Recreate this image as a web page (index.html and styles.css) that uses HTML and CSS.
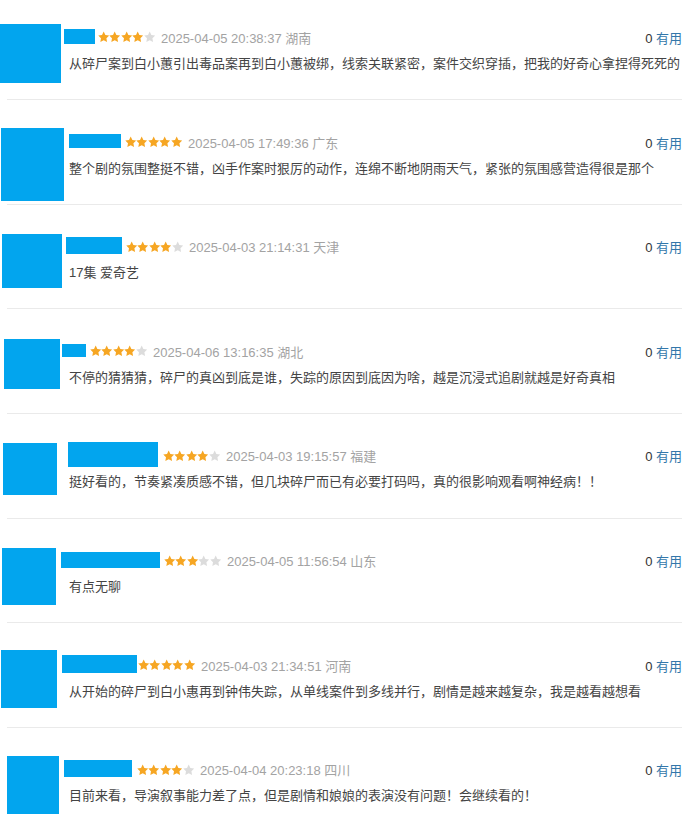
FILE: index.html
```html
<!DOCTYPE html>
<html lang="zh-CN">

<head>
    <meta charset="UTF-8">
    <meta name="viewport" content="width=device-width, initial-scale=1.0">
    <title>短评</title>
    <link rel="stylesheet" href="styles.css">
</head>

<body>
    <svg class="defs" aria-hidden="true">
        <symbol id="star" viewBox="1.5 1.5 21 21">
            <polygon points="12,2 15.09,8.26 22,9.27 17,14.14 18.18,21.02 12,17.77 5.82,21.02 7,14.14 2,9.27 8.91,8.26" />
        </symbol>
    </svg>

    <ul class="comment-list">
        <li class="comment">
            <div class="avatar"></div>
            <div class="comment-body">
                <div class="comment-info">
                    <span class="user-name"></span>
                    <span class="rating">
                        <svg class="on"><use href="#star" /></svg><svg class="on"><use href="#star" /></svg><svg class="on"><use href="#star" /></svg><svg class="on"><use href="#star" /></svg><svg><use href="#star" /></svg>
                    </span>
                    <span class="comment-time">2025-04-05 20:38:37 湖南</span>
                    <span class="votes"><span class="vote-count">0</span> <a href="#" class="vote-link">有用</a></span>
                </div>
                <p class="comment-text">从碎尸案到白小蕙引出毒品案再到白小蕙被绑，线索关联紧密，案件交织穿插，把我的好奇心拿捏得死死的</p>
            </div>
        </li>
        <li class="comment">
            <div class="avatar"></div>
            <div class="comment-body">
                <div class="comment-info">
                    <span class="user-name"></span>
                    <span class="rating">
                        <svg class="on"><use href="#star" /></svg><svg class="on"><use href="#star" /></svg><svg class="on"><use href="#star" /></svg><svg class="on"><use href="#star" /></svg><svg class="on"><use href="#star" /></svg>
                    </span>
                    <span class="comment-time">2025-04-05 17:49:36 广东</span>
                    <span class="votes"><span class="vote-count">0</span> <a href="#" class="vote-link">有用</a></span>
                </div>
                <p class="comment-text">整个剧的氛围整挺不错，凶手作案时狠厉的动作，连绵不断地阴雨天气，紧张的氛围感营造得很是那个</p>
            </div>
        </li>
        <li class="comment">
            <div class="avatar"></div>
            <div class="comment-body">
                <div class="comment-info">
                    <span class="user-name"></span>
                    <span class="rating">
                        <svg class="on"><use href="#star" /></svg><svg class="on"><use href="#star" /></svg><svg class="on"><use href="#star" /></svg><svg class="on"><use href="#star" /></svg><svg><use href="#star" /></svg>
                    </span>
                    <span class="comment-time">2025-04-03 21:14:31 天津</span>
                    <span class="votes"><span class="vote-count">0</span> <a href="#" class="vote-link">有用</a></span>
                </div>
                <p class="comment-text">17集 爱奇艺</p>
            </div>
        </li>
        <li class="comment">
            <div class="avatar"></div>
            <div class="comment-body">
                <div class="comment-info">
                    <span class="user-name"></span>
                    <span class="rating">
                        <svg class="on"><use href="#star" /></svg><svg class="on"><use href="#star" /></svg><svg class="on"><use href="#star" /></svg><svg class="on"><use href="#star" /></svg><svg><use href="#star" /></svg>
                    </span>
                    <span class="comment-time">2025-04-06 13:16:35 湖北</span>
                    <span class="votes"><span class="vote-count">0</span> <a href="#" class="vote-link">有用</a></span>
                </div>
                <p class="comment-text">不停的猜猜猜，碎尸的真凶到底是谁，失踪的原因到底因为啥，越是沉浸式追剧就越是好奇真相</p>
            </div>
        </li>
        <li class="comment">
            <div class="avatar"></div>
            <div class="comment-body">
                <div class="comment-info">
                    <span class="user-name"></span>
                    <span class="rating">
                        <svg class="on"><use href="#star" /></svg><svg class="on"><use href="#star" /></svg><svg class="on"><use href="#star" /></svg><svg class="on"><use href="#star" /></svg><svg><use href="#star" /></svg>
                    </span>
                    <span class="comment-time">2025-04-03 19:15:57 福建</span>
                    <span class="votes"><span class="vote-count">0</span> <a href="#" class="vote-link">有用</a></span>
                </div>
                <p class="comment-text">挺好看的，节奏紧凑质感不错，但几块碎尸而已有必要打码吗，真的很影响观看啊神经病！！</p>
            </div>
        </li>
        <li class="comment">
            <div class="avatar"></div>
            <div class="comment-body">
                <div class="comment-info">
                    <span class="user-name"></span>
                    <span class="rating">
                        <svg class="on"><use href="#star" /></svg><svg class="on"><use href="#star" /></svg><svg class="on"><use href="#star" /></svg><svg><use href="#star" /></svg><svg><use href="#star" /></svg>
                    </span>
                    <span class="comment-time">2025-04-05 11:56:54 山东</span>
                    <span class="votes"><span class="vote-count">0</span> <a href="#" class="vote-link">有用</a></span>
                </div>
                <p class="comment-text">有点无聊</p>
            </div>
        </li>
        <li class="comment">
            <div class="avatar"></div>
            <div class="comment-body">
                <div class="comment-info">
                    <span class="user-name"></span>
                    <span class="rating">
                        <svg class="on"><use href="#star" /></svg><svg class="on"><use href="#star" /></svg><svg class="on"><use href="#star" /></svg><svg class="on"><use href="#star" /></svg><svg class="on"><use href="#star" /></svg>
                    </span>
                    <span class="comment-time">2025-04-03 21:34:51 河南</span>
                    <span class="votes"><span class="vote-count">0</span> <a href="#" class="vote-link">有用</a></span>
                </div>
                <p class="comment-text">从开始的碎尸到白小惠再到钟伟失踪，从单线案件到多线并行，剧情是越来越复杂，我是越看越想看</p>
            </div>
        </li>
        <li class="comment">
            <div class="avatar"></div>
            <div class="comment-body">
                <div class="comment-info">
                    <span class="user-name"></span>
                    <span class="rating">
                        <svg class="on"><use href="#star" /></svg><svg class="on"><use href="#star" /></svg><svg class="on"><use href="#star" /></svg><svg class="on"><use href="#star" /></svg><svg><use href="#star" /></svg>
                    </span>
                    <span class="comment-time">2025-04-04 20:23:18 四川</span>
                    <span class="votes"><span class="vote-count">0</span> <a href="#" class="vote-link">有用</a></span>
                </div>
                <p class="comment-text">目前来看，导演叙事能力差了点，但是剧情和娘娘的表演没有问题！会继续看的！</p>
            </div>
        </li>
    </ul>
</body>

</html>
```

FILE: styles.css
```css
body {
    margin: 0;
    background: #fff;
    font-family: "Liberation Sans", Arial, "Noto Sans CJK SC", sans-serif;
    font-size: 13px;
    color: #333;
    overflow: hidden;
}

.defs {
    display: none;
}

.comment-list {
    list-style: none;
    margin: -4.67px 0 0 0;
    padding: 0;
}

.comment {
    display: grid;
    grid-template-columns: 62px 1fr;
    align-items: start;
    box-sizing: border-box;
    height: 104.67px;
    margin: 0 17px 0 7px;
    border-bottom: 1px solid #eaeaea;
}

/* the blue blocks hide avatar and user name */
.avatar {
    background: #02a5ee;
}

.comment-body {
    min-width: 0;
    padding-top: 32px;
}

.comment-info {
    display: flex;
    align-items: center;
    height: 20px;
    white-space: nowrap;
}

.user-name {
    flex: none;
    margin-top: -2px;
    background: #02a5ee;
}

.rating {
    display: flex;
    flex: none;
}

.rating svg {
    width: 11.4px;
    height: 12px;
    fill: #dcdcdc;
}

.rating svg.on {
    fill: #f6a623;
}

.comment-time {
    margin-left: 6px;
    color: #a3a3a3;
}

.votes {
    margin-left: auto;
    color: #333;
}

.vote-link {
    color: #37a;
    text-decoration: none;
}

.comment-text {
    margin: 6.5px 0 0;
    line-height: 20px;
    color: #444;
    white-space: nowrap;
    overflow: hidden;
}

/* per row sizes of the blocks */
.comment:nth-child(1) .avatar { margin: 28.7px 0 0 -7px; width: 61px; height: 59px; }
.comment:nth-child(2) .avatar { margin: 28px 0 0 -6px; width: 63px; height: 73px; }
.comment:nth-child(3) .avatar { margin: 29.3px 0 0 -5px; width: 60px; height: 54px; }
.comment:nth-child(4) .avatar { margin: 29.7px 0 0 -3px; width: 56px; height: 50px; }
.comment:nth-child(5) .avatar { margin: 29px 0 0 -4px; width: 54px; height: 52px; }
.comment:nth-child(6) .avatar { margin: 29.3px 0 0 -5px; width: 54px; height: 57px; }
.comment:nth-child(7) .avatar { margin: 26.7px 0 0 -6px; width: 56px; height: 58px; }
.comment:nth-child(8) .avatar { margin: 27.7px 0 0 0; width: 52px; height: 58px; }

.comment:nth-child(1) .user-name { margin-left: -5px; margin-right: 3px; width: 31px; height: 15px; }
.comment:nth-child(2) .user-name { margin-left: 0; margin-right: 4px; width: 52px; height: 14px; }
.comment:nth-child(3) .user-name { margin-left: -3px; margin-right: 4px; width: 56px; height: 17px; }
.comment:nth-child(4) .user-name { margin-left: -7px; margin-right: 4px; width: 24px; height: 13px; }
.comment:nth-child(5) .user-name { margin-left: -1px; margin-right: 5px; width: 90px; height: 25px; }
.comment:nth-child(6) .user-name { margin-left: -8px; margin-right: 4px; width: 99px; height: 16px; }
.comment:nth-child(7) .user-name { margin-left: -7px; margin-right: 1px; width: 75px; height: 18px; }
.comment:nth-child(8) .user-name { margin-left: -5px; margin-right: 5px; width: 68px; height: 17px; }
```
